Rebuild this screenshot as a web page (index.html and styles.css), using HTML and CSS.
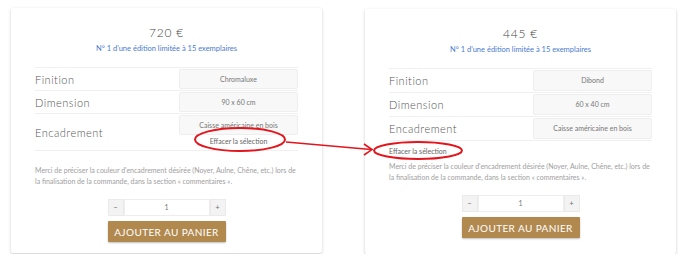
FILE: index.html
```html
<!DOCTYPE html>
<html lang="fr">
<head>
    <meta charset="UTF-8">
    <title>Effacer la sélection</title>
    <link rel="stylesheet" href="styles.css">
</head>
<body>
    <div class="compare">
        <div class="card">
            <div class="price">720 €</div>
            <div class="edition">N° 1 d'une édition limitée à 15 exemplaires</div>
            <table class="variations">
                <tr>
                    <td class="label">Finition</td>
                    <td class="value"><div class="select">Chromaluxe</div></td>
                </tr>
                <tr>
                    <td class="label">Dimension</td>
                    <td class="value"><div class="select">90 x 60 cm</div></td>
                </tr>
                <tr class="tall">
                    <td class="label">Encadrement</td>
                    <td class="value">
                        <div class="select">Caisse américaine en bois</div>
                        <div class="reset">Effacer la sélection</div>
                    </td>
                </tr>
            </table>
            <p class="note">Merci de préciser la couleur d'encadrement désirée (Noyer, Aulne, Chêne, etc.) lors de la finalisation de la commande, dans la section « commentaires ».</p>
            <div class="qty">
                <span class="qty-btn">−</span>
                <span class="qty-input">1</span>
                <span class="qty-btn">+</span>
            </div>
            <button class="add">AJOUTER AU PANIER</button>
        </div>

        <div class="card shifted">
            <div class="price">445 €</div>
            <div class="edition">N° 1 d'une édition limitée à 15 exemplaires</div>
            <table class="variations">
                <tr>
                    <td class="label">Finition</td>
                    <td class="value"><div class="select">Dibond</div></td>
                </tr>
                <tr>
                    <td class="label">Dimension</td>
                    <td class="value"><div class="select">60 x 40 cm</div></td>
                </tr>
                <tr>
                    <td class="label">Encadrement</td>
                    <td class="value"><div class="select">Caisse américaine en bois</div></td>
                </tr>
            </table>
            <div class="reset left">Effacer la sélection</div>
            <p class="note tight">Merci de préciser la couleur d'encadrement désirée (Noyer, Aulne, Chêne, etc.) lors de la finalisation de la commande, dans la section « commentaires ».</p>
            <div class="qty">
                <span class="qty-btn">−</span>
                <span class="qty-input">1</span>
                <span class="qty-btn">+</span>
            </div>
            <button class="add">AJOUTER AU PANIER</button>
        </div>
    </div>

    <svg class="marks" width="690" height="266" viewBox="0 0 690 266">
        <ellipse cx="240" cy="139.5" rx="45" ry="11.5" fill="none" stroke="#e3151c" stroke-width="2"/>
        <ellipse cx="418" cy="150.5" rx="44" ry="8.5" fill="none" stroke="#e3151c" stroke-width="2"/>
        <line x1="286" y1="142" x2="371" y2="149.5" stroke="#e3151c" stroke-width="1.6"/>
        <polyline points="364,144 372,149.6 364,155" fill="none" stroke="#e3151c" stroke-width="1.6"/>
    </svg>
</body>
</html>
```

FILE: styles.css
```css
body {
    margin: 0;
    background: #fff;
    font-family: Lato, "Open Sans", sans-serif;
    color: #555;
}
.compare {
    display: flex;
    gap: 43px;
    padding: 8px 0 0 11px;
}
.card {
    width: 263px;
    height: 213px;
    padding: 17px 24px 15px 24px;
    background: #fff;
    border-radius: 2px;
    box-shadow: 0 1px 3px rgba(0, 0, 0, 0.22);
    text-align: center;
}
.card.shifted {
    margin-top: 1px;
}
.price {
    font-size: 12px;
    font-weight: 300;
    letter-spacing: 0.8px;
    color: #444;
    line-height: 16px;
}
.edition {
    font-size: 7.5px;
    color: #4a7bd0;
    line-height: 12px;
    margin-top: 2px;
}
.variations {
    width: 100%;
    border-collapse: collapse;
    margin-top: 12px;
    border-top: 1px solid #f0f0f0;
}
.variations td {
    border-bottom: 1px solid #f0f0f0;
    padding: 1px 0 1px 0;
    vertical-align: middle;
}
.label {
    text-align: left;
    font-size: 11px;
    font-weight: 300;
    letter-spacing: 0.5px;
    color: #555;
    height: 20px;
}
.value {
    width: 119px;
}
.select {
    height: 18px;
    line-height: 18px;
    background: #f8f8f8;
    border: 1px solid #eee;
    border-radius: 2px;
    font-size: 7px;
    color: #777;
}
.shifted .select {
    height: 19px;
    line-height: 19px;
}
.tall .value {
    padding-bottom: 4px;
}
.reset {
    font-size: 7px;
    color: #666;
    line-height: 10px;
    margin-top: 1px;
}
.reset.left {
    text-align: left;
    margin-top: 5px;
}
.note {
    margin: 14px 0 0 0;
    text-align: left;
    font-size: 7px;
    line-height: 10.5px;
    color: #a0a0a0;
}
.note.tight {
    margin-top: 5px;
}
.qty {
    display: flex;
    justify-content: center;
    margin-top: 13px;
    height: 17px;
}
.qty-btn {
    width: 16px;
    background: #f3f3f3;
    border: 1px solid #eaeaea;
    box-sizing: border-box;
    font-size: 7px;
    line-height: 15px;
    color: #666;
}
.qty-input {
    width: 86px;
    background: #fff;
    border: 1px solid #eee;
    box-sizing: border-box;
    font-size: 7px;
    line-height: 15px;
    color: #777;
}
.add {
    display: block;
    margin: 5px auto 0 auto;
    width: 118px;
    height: 21px;
    padding: 0;
    border: none;
    border-radius: 1px;
    background: #b1894f;
    color: #fff;
    font-family: Lato, sans-serif;
    font-size: 10px;
    font-weight: 400;
    letter-spacing: 0.4px;
    box-shadow: 0 1px 2px rgba(0, 0, 0, 0.25);
}
.marks {
    position: absolute;
    left: 0;
    top: 0;
    pointer-events: none;
}
```
